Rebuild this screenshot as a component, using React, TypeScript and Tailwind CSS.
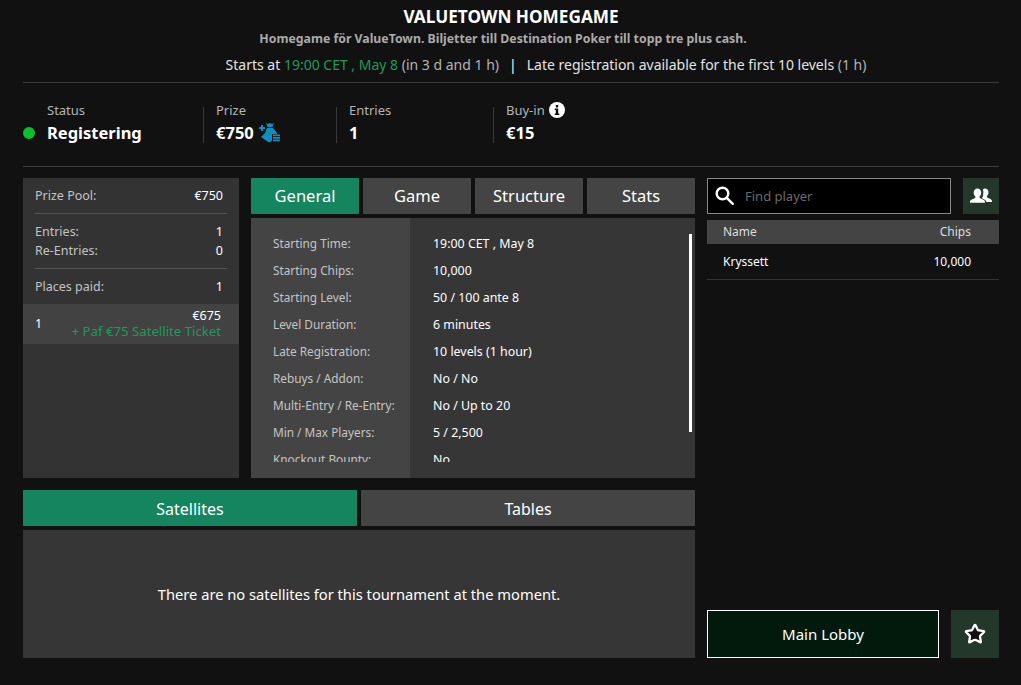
import { Star } from "lucide-react";

const font = "font-['Noto_Sans',sans-serif]";

const generalRows = [
  ["Starting Time:", "19:00 CET , May 8"],
  ["Starting Chips:", "10,000"],
  ["Starting Level:", "50 / 100 ante 8"],
  ["Level Duration:", "6 minutes"],
  ["Late Registration:", "10 levels (1 hour)"],
  ["Rebuys / Addon:", "No / No"],
  ["Multi-Entry / Re-Entry:", "No / Up to 20"],
  ["Min / Max Players:", "5 / 2,500"],
  ["Knockout Bounty:", "No"],
];

const tabs = ["General", "Game", "Structure", "Stats"];

function MoneyIcon() {
  return (
    <svg width="22" height="20" viewBox="0 0 22 20" fill="#0f8fc0">
      <path d="M1 4h2V2h2v2h2v2H5v2H3V6H1z" />
      <path d="M8 0l2 1 2-1 2 1 2-1-1.500 4h-5z" />
      <path d="M9 5h6l4 5v1h-5v7l-3 1.500-8-5.500 4-4z" />
      <path d="M15 11.500h7v1.700h-7zM15 14h7v1.700h-7zM15 16.500h7v1.700h-7z" />
    </svg>
  );
}

function UsersIcon() {
  return (
    <svg width="22" height="16" viewBox="0 0 22 16" fill="white">
      <path d="M15 0.500c2.100 0 3.500 1.600 3.500 3.800 0 1.500-.6 2.900-1.500 3.700v1.200c0 .6 4.300 1.500 4.900 3.300.1.500.1 1.500.1 1.500h-5.600c-.2-1.500-1.400-2.400-3.600-3.300-.6-.3-.7-.6-.7-1.100.4-.6.6-.8.9-1.900.3-1 .4-3.400.3-4.400-.1-.9-.3-1.500-.5-1.900.5-.3 1.400-.9 2.200-.9z" />
      <path d="M7.500 0.500c2.300 0 3.700 1.700 3.700 4 0 1.600-.6 3-1.600 3.900v1.300c0 .7 4.600 1.600 5.300 3.500.1.500.1 1.600.1 1.600H0v-1.600c.6-1.900 5.300-2.800 5.300-3.500V8.400c-1-.9-1.600-2.300-1.600-3.900 0-2.300 1.500-4 3.800-4z" />
    </svg>
  );
}

function SearchIcon() {
  return (
    <svg width="20" height="20" viewBox="0 0 20 20" fill="none" stroke="white" strokeWidth="2.400">
      <circle cx="7.500" cy="7.500" r="5.800" />
      <path d="M11.800 11.800l6 6" strokeLinecap="round" />
    </svg>
  );
}

function Stat({ label, value, children, className }: { label: string; value: string; children?: React.ReactNode; className: string }) {
  return (
    <div className={`flex h-[36px] flex-col justify-between border-l border-[#3a3a3a] pl-[12px] ${className}`}>
      <div className="-mt-[5px] flex items-center gap-[4px] text-[13px] leading-[16px] text-[#b4b4b4]">
        {label}
        {children}
      </div>
      <div className="flex h-[20px] items-center gap-[4px] text-[16.500px] leading-[20px] font-bold text-white">
        {value}
        {label === "Prize" && <MoneyIcon />}
      </div>
    </div>
  );
}

export default function App() {
  return (
    <div className={`${font} h-[685px] w-[1021px] overflow-hidden bg-[#111111] pr-[22px] pl-[23px] text-white`}>
      <header className="flex h-[83px] flex-col items-center border-b border-[#3a3a3a] pt-[6px]">
        <h1 className="text-[17.200px] leading-[22px] font-bold">VALUETOWN HOMEGAME</h1>
        <p className="mt-[2px] mr-[16px] text-[12.300px] leading-[18px] font-bold text-[#aaaaaa]">
          Homegame för ValueTown. Biljetter till Destination Poker till topp tre plus cash.
        </p>
        <p className="mt-[7px] ml-[70px] text-[14px] leading-[20px] text-[#e4e4e4]">
          Starts at <span className="text-[#1d9a5c]">19:00 CET , May 8</span>{" "}
          <span className="text-[#b4b4b4]">(in 3 d and 1 h)</span>
          <span className="mx-[10px] text-white">|</span>
          Late registration available for the first 10 levels <span className="text-[#b4b4b4]">(1 h)</span>
        </p>
      </header>

      <section className="flex h-[84px] items-center border-b border-[#3a3a3a] pt-[1px]">
        <div className="flex w-[180px] items-center">
          <span className="mt-[16px] mr-[12px] h-[12px] w-[12px] rounded-full bg-[#0bbf2a]" />
          <div className="flex h-[36px] flex-col justify-between">
            <div className="-mt-[5px] text-[13px] leading-[16px] text-[#b4b4b4]">Status</div>
            <div className="text-[16.500px] leading-[20px] font-bold">Registering</div>
          </div>
        </div>
        <Stat label="Prize" value="€750" className="w-[133px]" />
        <Stat label="Entries" value="1" className="w-[157px]" />
        <Stat label="Buy-in" value="€15" className="w-[120px]">
          <svg width="16" height="16" viewBox="0 0 16 16">
            <circle cx="8" cy="8" r="8" fill="white" />
            <rect x="6.800" y="3" width="2.400" height="2.400" fill="#111111" />
            <path d="M5.800 6.500h3.400v5h1.100V13H5.800v-1.500h1v-3.500h-1z" fill="#111111" />
          </svg>
        </Stat>
      </section>

      <main className="mt-[11px] flex gap-[12px]">
        <div className="w-[672px]">
          <div className="flex h-[300px] gap-[12px]">
            <aside className="h-full w-[216px] bg-[#333333] pt-[9px] text-[12.500px] text-[#c4c4c4]">
              <div className="mx-[12px] flex h-[27px] items-start justify-between border-b border-[#555555] pr-[4px] leading-[18px]">
                <span>Prize Pool:</span>
                <span className="text-white">€750</span>
              </div>
              <div className="mx-[12px] flex flex-col border-b border-[#555555] pt-[8px] pr-[4px] pb-[8px] leading-[19px]">
                <div className="flex justify-between">
                  <span>Entries:</span>
                  <span className="text-white">1</span>
                </div>
                <div className="flex justify-between">
                  <span>Re-Entries:</span>
                  <span className="text-white">0</span>
                </div>
              </div>
              <div className="mx-[12px] flex h-[35px] items-center justify-between pr-[4px] leading-[18px]">
                <span>Places paid:</span>
                <span className="text-white">1</span>
              </div>
              <div className="flex h-[40px] items-center justify-between bg-[#424242] pr-[18px] pl-[12px] text-white">
                <span>1</span>
                <div className="pb-[1px] text-right">
                  <div className="leading-[16px]">€675</div>
                  <div className="text-[13.200px] leading-[15px] text-[#1f9a5c]">+ Paf €75 Satellite Ticket</div>
                </div>
              </div>
            </aside>

            <div className="w-[444px]">
              <div className="flex gap-[4px]">
                {tabs.map((t, i) => (
                  <div
                    key={t}
                    className={`flex h-[36px] w-[108px] items-center justify-center pt-[1px] text-[16.500px] ${i === 0 ? "bg-[#14855e]" : "bg-[#444444]"}`}
                  >
                    {t}
                  </div>
                ))}
              </div>
              <div className="relative mt-[4px] flex h-[260px] bg-[#363636] text-[12px]">
                <div className="h-full w-[159px] bg-[#444444] pt-[12px] pl-[22px] text-[#c4c4c4]">
                  <div className="h-[232px] overflow-hidden">
                    {generalRows.map(([k]) => (
                      <div key={k} className="flex h-[27px] items-center text-[11.800px] whitespace-nowrap">
                        {k}
                      </div>
                    ))}
                  </div>
                </div>
                <div className="pt-[13px] pl-[23px]">
                  <div className="h-[231px] overflow-hidden">
                    {generalRows.map(([k, v]) => (
                      <div key={k} className="flex h-[27px] items-center text-[12.400px]">
                        {v}
                      </div>
                    ))}
                  </div>
                </div>
                <div className="absolute top-[16px] right-[3px] h-[198px] w-[3px] bg-white" />
              </div>
            </div>
          </div>

          <div className="mt-[12px] flex gap-[4px]">
            <div className="flex h-[36px] w-[334px] items-center justify-center bg-[#14855e] pt-[1px] text-[16px]">Satellites</div>
            <div className="flex h-[36px] w-[334px] items-center justify-center bg-[#444444] pt-[1px] text-[16px]">Tables</div>
          </div>
          <div className="mt-[4px] flex h-[128px] items-center justify-center bg-[#363636] text-[14.700px]">
            There are no satellites for this tournament at the moment.
          </div>
        </div>

        <aside className="flex h-[480px] w-[292px] flex-col">
          <div className="flex gap-[12px]">
            <div className="flex h-[36px] w-[244px] items-center gap-[10px] border border-[#888888] bg-black pl-[7px]">
              <SearchIcon />
              <span className="pt-[1px] text-[13px] text-[#6a6a6a]">Find player</span>
            </div>
            <div className="flex h-[36px] w-[36px] items-center justify-center bg-[#23382b]">
              <UsersIcon />
            </div>
          </div>
          <div className="mt-[6px] flex h-[24px] items-center justify-between bg-[#444444] px-[16px] text-[12px] text-[#dddddd]">
            <span>Name</span>
            <span className="pr-[12px]">Chips</span>
          </div>
          <div className="flex h-[36px] items-center justify-between border-b border-[#333333] px-[16px] pr-[28px] text-[12px]">
            <span>Kryssett</span>
            <span>10,000</span>
          </div>
          <div className="mt-auto flex gap-[12px]">
            <div className="flex h-[48px] w-[232px] items-center justify-center border border-white bg-[#021a0c] text-[15px]">
              Main Lobby
            </div>
            <div className="flex h-[48px] w-[48px] items-center justify-center bg-[#23382b]">
              <Star size={22} strokeWidth={2.500} color="white" fill="#111111" />
            </div>
          </div>
        </aside>
      </main>
    </div>
  );
}
